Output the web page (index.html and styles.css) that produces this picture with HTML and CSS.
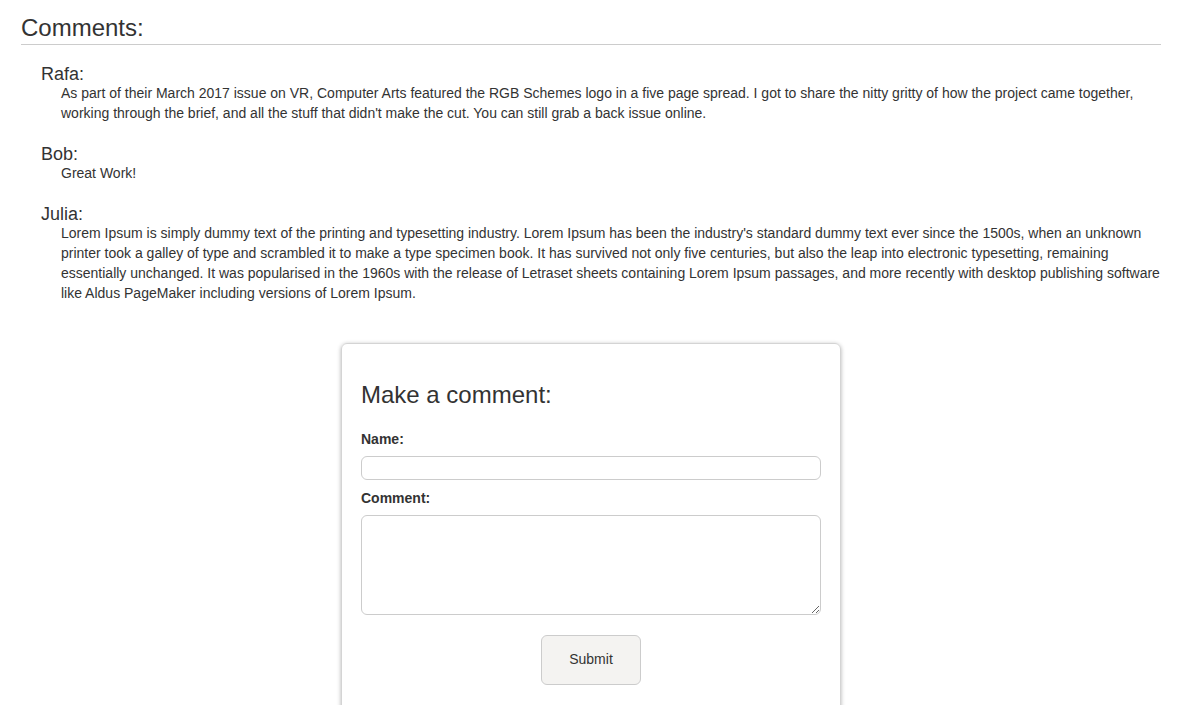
FILE: index.html
```html
<!DOCTYPE html>
<html>
<head>
<meta charset="utf-8">
<link rel="stylesheet" href="styles.css">
</head>
<body>
<div class="page">
  <h2 class="title">Comments:</h2>
  <div class="comments">
    <div class="comment">
      <div class="author">Rafa:</div>
      <p class="text">As part of their March 2017 issue on VR, Computer Arts featured the RGB Schemes logo in a five page spread. I got to share the nitty gritty of how the project came together, working through the brief, and all the stuff that didn't make the cut. You can still grab a back issue online.</p>
    </div>
    <div class="comment">
      <div class="author">Bob:</div>
      <p class="text">Great Work!</p>
    </div>
    <div class="comment">
      <div class="author">Julia:</div>
      <p class="text">Lorem Ipsum is simply dummy text of the printing and typesetting industry. Lorem Ipsum has been the industry's standard dummy text ever since the 1500s, when an unknown printer took a galley of type and scrambled it to make a type specimen book. It has survived not only five centuries, but also the leap into electronic typesetting, remaining essentially unchanged. It was popularised in the 1960s with the release of Letraset sheets containing Lorem Ipsum passages, and more recently with desktop publishing software like Aldus PageMaker including versions of Lorem Ipsum.</p>
    </div>
  </div>
  <form class="card">
    <h3 class="card-title">Make a comment:</h3>
    <label class="label" for="name">Name:</label>
    <input class="input" id="name" type="text">
    <label class="label" for="comment">Comment:</label>
    <textarea class="textarea" id="comment"></textarea>
    <div class="actions">
      <button class="submit" type="button">Submit</button>
    </div>
  </form>
</div>
</body>
</html>
```

FILE: styles.css
```css
html, body {
  margin: 0;
  padding: 0;
  background: #fff;
}
body {
  font-family: "Liberation Sans", Arial, sans-serif;
  font-size: 14px;
  line-height: 20px;
  color: #333;
}
.page {
  width: 1140px;
  padding: 0 41px 0 21px;
}
.title {
  margin: 0;
  padding-top: 14px;
  font-size: 24px;
  font-weight: 400;
  line-height: 28px;
  padding-bottom: 2px;
  border-bottom: 1px solid #ccc;
}
.comments {
  padding: 0 0 0 20px;
  margin-top: 18px;
}
.comment {
  margin-bottom: 20px;
}
.author {
  font-size: 18px;
  line-height: 18px;
  padding-top: 2px;
}
.text {
  margin: 0 0 0 20px;
}
.card {
  width: 460px;
  margin: 40px auto 0;
  padding: 20px 19px 40px;
  border: 1px solid #d4d4d4;
  border-radius: 6px;
  box-shadow: 0 1px 4px rgba(0,0,0,0.3);
  display: flex;
  flex-direction: column;
}
.card-title {
  margin: 17px 0 20px;
  font-size: 24px;
  font-weight: 400;
  line-height: 28px;
}
.label {
  font-weight: 700;
  margin-bottom: 7px;
}
.input {
  box-sizing: border-box;
  height: 24px;
  border: 1px solid #ccc;
  border-radius: 6px;
  margin: 0 0 8px;
  padding: 2px 6px;
  font: inherit;
}
.textarea {
  box-sizing: border-box;
  height: 100px;
  border: 1px solid #ccc;
  border-radius: 6px;
  margin: 0;
  padding: 4px 6px;
  font: inherit;
  resize: vertical;
}
.actions {
  display: flex;
  justify-content: center;
  margin-top: 20px;
}
.submit {
  width: 100px;
  height: 50px;
  padding: 0 0 3px;
  background: #f4f3f1;
  border: 1px solid #ccc;
  border-radius: 6px;
  font-family: "Liberation Sans", Arial, sans-serif;
  font-size: 14px;
  color: #333;
}
```
